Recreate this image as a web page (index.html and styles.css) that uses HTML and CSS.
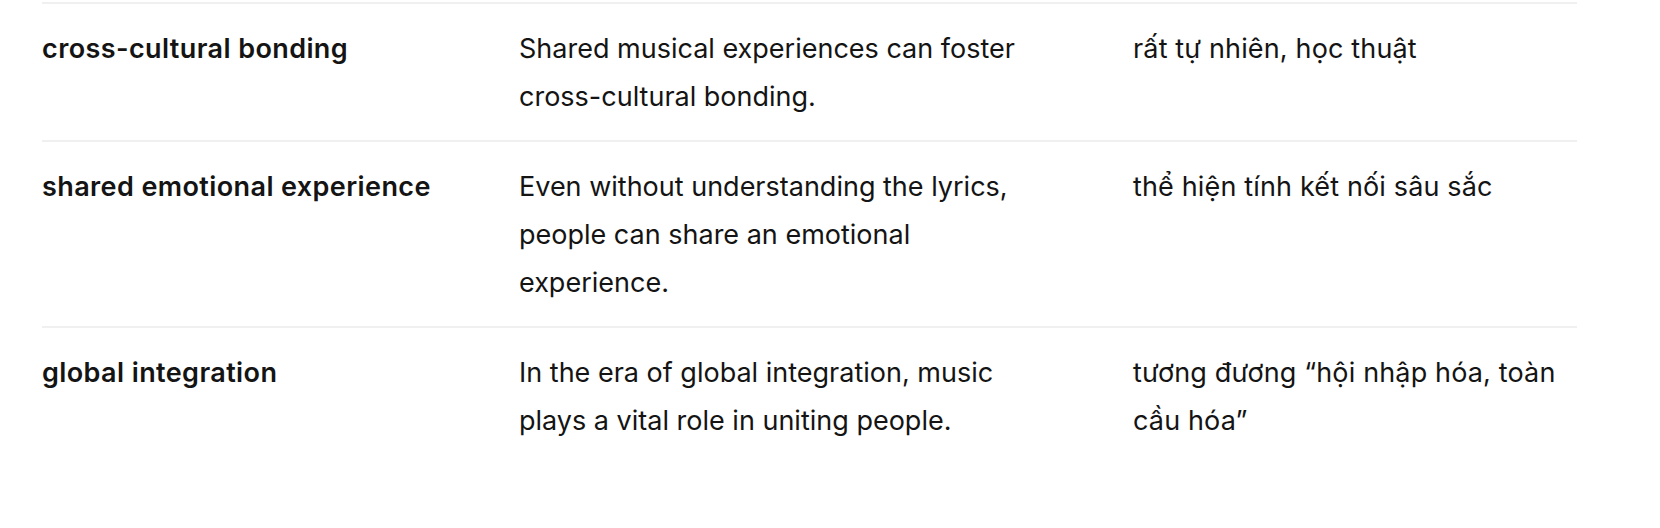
FILE: index.html
```html
<!DOCTYPE html>
<html lang="vi">
<head>
<meta charset="utf-8">
<title>Vocabulary</title>
<link rel="stylesheet" href="styles.css">
</head>
<body>
<div class="vocab-table">
  <div class="vocab-row">
    <div class="cell term">cross-cultural bonding</div>
    <div class="cell example">Shared musical experiences can foster cross-cultural bonding.</div>
    <div class="cell note">rất tự nhiên, học thuật</div>
  </div>
  <div class="vocab-row">
    <div class="cell term">shared emotional experience</div>
    <div class="cell example">Even without understanding the lyrics, people can share an emotional experience.</div>
    <div class="cell note">thể hiện tính kết nối sâu sắc</div>
  </div>
  <div class="vocab-row">
    <div class="cell term">global integration</div>
    <div class="cell example">In the era of global integration, music plays a vital role in uniting people.</div>
    <div class="cell note">tương đương “hội nhập hóa, toàn cầu hóa”</div>
  </div>
</div>
</body>
</html>
```
FILE: styles.css
```css
html, body {
  margin: 0;
  padding: 0;
  background: #ffffff;
}

body {
  font-family: Inter, "Noto Sans", "Liberation Sans", sans-serif;
  color: #141414;
  font-size: 27px;
  line-height: 48px;
}

.vocab-table {
  margin: 2px 0 0 42px;
  width: 1535px;
  display: flex;
  flex-direction: column;
}

.vocab-row {
  display: grid;
  grid-template-columns: 477px 614px 444px;
  border-top: 2px solid #f0f0f0;
  padding: 21px 0 19px;
}

.cell {
  min-width: 0;
}

.term {
  font-weight: 600;
  letter-spacing: 0.4px;
  padding-right: 24px;
}

.example {
  padding-right: 92px;
}

.note {
  padding-right: 0;
  letter-spacing: 0.15px;
}
```
